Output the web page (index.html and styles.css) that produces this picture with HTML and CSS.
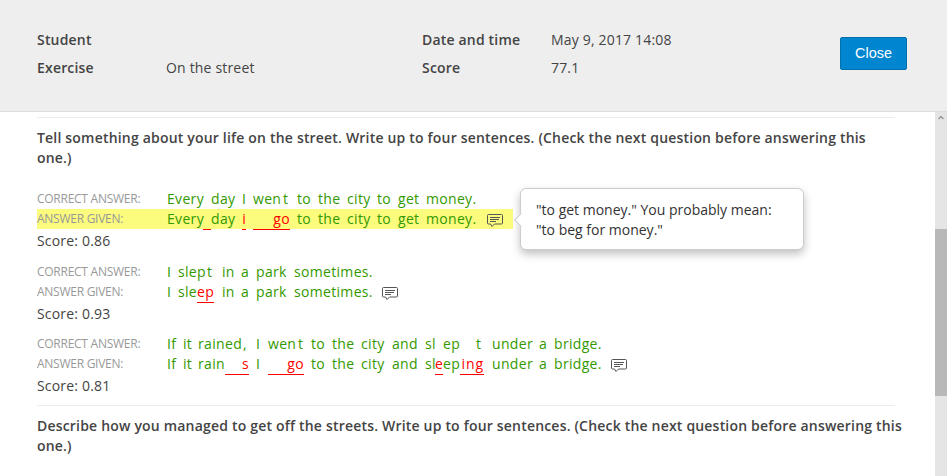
FILE: index.html
```
<!DOCTYPE html>
<html lang="en">
<head>
  <meta charset="UTF-8">
  <meta name="viewport" content="width=device-width, initial-scale=1.0">
  <title>On the street</title>
  <link rel="stylesheet" href="styles.css">
</head>
<body>
  <svg class="defs" width="0" height="0">
    <symbol id="comment" viewBox="0 0 16 13">
      <path d="M1.5 .5h13a1 1 0 0 1 1 1v7.500a1 1 0 0 1-1 1H7.500L5 12.500 3.500 10h-2a1 1 0 0 1-1-1V1.500a1 1 0 0 1 1-1z" fill="none" stroke="currentColor"/>
      <path d="M3 3.500h10M3 5.500h9M3 7.500h6" stroke="currentColor"/>
    </symbol>
  </svg>

  <header class="header">
    <dl class="info info-left">
      <dt>Student</dt><dd></dd>
      <dt>Exercise</dt><dd>On the street</dd>
    </dl>
    <dl class="info">
      <dt>Date and time</dt><dd>May 9, 2017 14:08</dd>
      <dt>Score</dt><dd>77.1</dd>
    </dl>
    <button type="button" class="close">Close</button>
  </header>

  <main class="main">
    <div class="content">
      <section class="question">
        <h2>Tell something about your life on the street. Write up to four sentences. (Check the next question before answering this<br>one.)</h2>

        <div class="answer">
          <div class="row">
            <span class="label">CORRECT ANSWER:</span>
            <div class="text first">
              <span>Every</span><span></span><span>day</span><span>I</span><span></span><span>wen</span><span>t</span><span></span><span>to</span><span>the</span><span>city</span><span>to</span><span>get</span><span>money.</span>
            </div>
          </div>
          <div class="row active">
            <span class="label">ANSWER GIVEN:</span>
            <div class="text first">
              <span>Every</span><span class="wrong"></span><span>day</span><span class="wrong">i</span><span></span><span class="wrong two">go</span><span></span><span>to</span><span>the</span><span>city</span><span>to</span><span>get</span><span>money.</span>
            </div>
            <svg class="comment"><use href="#comment"/></svg>
            <div class="tooltip">"to get money." You probably mean:<br>"to beg for money."</div>
          </div>
          <div class="score">Score: 0.86</div>
        </div>

        <div class="answer">
          <div class="row">
            <span class="label">CORRECT ANSWER:</span>
            <div class="text second">
              <span>I</span><span>sle</span><span>p</span><span>t</span><span></span><span>in</span><span>a</span><span>park</span><span>sometimes.</span>
            </div>
          </div>
          <div class="row">
            <span class="label">ANSWER GIVEN:</span>
            <div class="text second">
              <span>I</span><span>sle</span><span class="wrong two">ep</span><span></span><span>in</span><span>a</span><span>park</span><span>sometimes.</span>
            </div>
            <svg class="comment"><use href="#comment"/></svg>
          </div>
          <div class="score">Score: 0.93</div>
        </div>

        <div class="answer">
          <div class="row">
            <span class="label">CORRECT ANSWER:</span>
            <div class="text third">
              <span>If</span><span>it</span><span>rain</span><span>ed</span><span>,</span><span></span><span>I</span><span>wen</span><span>t</span><span></span><span>to</span><span>the</span><span>city</span><span>and</span><span>sl</span><span></span><span>ep</span><span></span><span>t</span><span></span><span>under</span><span>a</span><span>bridge.</span>
            </div>
          </div>
          <div class="row">
            <span class="label">ANSWER GIVEN:</span>
            <div class="text third">
              <span>If</span><span>it</span><span>rain</span><span class="wrong two">s</span><span></span><span>I</span><span class="wrong two">go</span><span></span><span>to</span><span>the</span><span>city</span><span>and</span><span>sl</span><span class="wrong">e</span><span>ep</span><span class="wrong two spaced">ing</span><span></span><span>under</span><span>a</span><span>bridge.</span>
            </div>
            <svg class="comment"><use href="#comment"/></svg>
          </div>
          <div class="score">Score: 0.81</div>
        </div>
      </section>

      <section class="question">
        <h2>Describe how you managed to get off the streets. Write up to four sentences. (Check the next question before answering this<br>one.)</h2>
      </section>
    </div>

    <div class="scrollbar">
      <svg class="up" viewBox="0 0 6 5"><path d="M.5 4L3 1.500 5.500 4" fill="none" stroke="#999" stroke-width="1.500"/></svg>
      <div class="thumb"></div>
    </div>
  </main>
</body>
</html>
```
FILE: styles.css
```
* {
  box-sizing: border-box;
}
body {
  margin: 0;
  height: 476px;
  overflow: hidden;
  background: #fff;
  color: #444;
  font-family: "Open Sans", sans-serif;
  font-size: 14px;
  line-height: 20px;
}
.defs {
  display: block;
}
.header {
  display: flex;
  align-items: flex-start;
  height: 112px;
  padding: 26px 40px 0 37px;
  background: #eee;
  border-bottom: 1px solid #dcdcdc;
}
.info {
  display: grid;
  grid-template-columns: 129px auto;
  grid-auto-rows: 28px;
  margin: 0;
  line-height: 28px;
  letter-spacing: 0.18px;
}
.info-left {
  width: 385px;
}
.info dt {
  font-weight: 600;
}
.info dd {
  margin: 0;
}
.close {
  width: 67px;
  height: 33px;
  margin: 11px 0 0 auto;
  padding: 0 0 1px;
  background: #0085d0;
  border: 1px solid #0071ad;
  border-radius: 2px;
  color: #fff;
  font-family: "Liberation Sans", sans-serif;
  font-size: 14.4px;
}
.main {
  display: flex;
  height: 364px;
}
.content {
  width: 935px;
  padding: 5px 32px 0 37px;
  overflow: hidden;
}
.question {
  width: 858px;
  border-top: 1px solid #ebebeb;
}
.question h2 {
  height: 51px;
  margin: 0;
  padding-top: 10px;
  font-size: 14px;
  font-weight: 600;
  line-height: 20.4px;
  letter-spacing: 0.19px;
  white-space: nowrap;
}
.question .answer:first-of-type {
  margin-top: 20px;
}
.answer {
  height: 72.5px;
}
.answer:last-child {
  height: 71px;
}
.row {
  display: flex;
  position: relative;
  height: 20px;
}
.active {
  width: 476px;
  background: #fbfb7e;
}
.label {
  width: 130px;
  color: #999;
  font-size: 12px;
  letter-spacing: -0.26px;
}
/* both rows of an answer share the same columns, so the words line up */
.text {
  display: grid;
  color: #339900;
  letter-spacing: 0.32px;
  white-space: nowrap;
}
.text span {
  height: 20px;
}
.first {
  grid-template-columns: 36px 8px 31px 4px 7px 30px 7px 7px 21px 29px 30px 21px 28px 51px;
}
.second {
  grid-template-columns: 11px 19px 10px 7px 8px 19px 15px 38px 78px;
}
.third {
  grid-template-columns: 16px 15px 27px 18px 6px 7px 12px 30px 6px 7px 21px 29px 31px 33px 10px 8px 17px 16px 8px 8px 47px 15px 47px;
}
.text .wrong {
  height: 21px;
  border-bottom: 1px solid #f00;
  color: #f00;
  text-align: right;
}
.text .spaced {
  letter-spacing: 0.9px;
}
.two {
  grid-column: span 2;
}
.comment {
  width: 16px;
  height: 13px;
  margin: 5px 0 0 10px;
  color: #555;
}
.score {
  line-height: 23px;
  letter-spacing: 0.18px;
}
.tooltip {
  position: absolute;
  left: 483px;
  top: -21px;
  width: 284px;
  height: 62px;
  padding: 11px 15px;
  background: #fff;
  border: 1px solid #ccc;
  border-radius: 6px;
  box-shadow: 0 4px 8px rgba(0, 0, 0, 0.25);
  color: #333;
  white-space: nowrap;
}
.tooltip::before {
  content: "";
  position: absolute;
  left: -5px;
  top: 26px;
  width: 9px;
  height: 9px;
  background: #fff;
  border-left: 1px solid #ccc;
  border-bottom: 1px solid #ccc;
  transform: rotate(45deg);
}
.scrollbar {
  width: 12px;
  background: #e5e5e5;
}
.up {
  display: block;
  width: 6px;
  height: 5px;
  margin: 3px auto 0;
}
.thumb {
  height: 167px;
  margin-top: 109px;
  background: #b8b8b8;
}
```
